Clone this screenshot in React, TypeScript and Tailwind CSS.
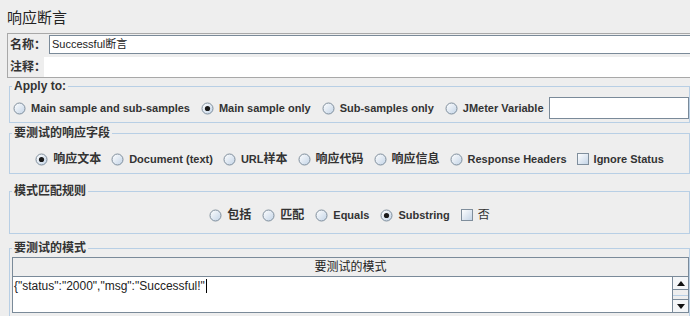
import React from 'react';

const sans = "font-['Liberation_Sans','Noto_Sans_CJK_SC',sans-serif]";

function RadioIcon({ on }: { on?: boolean }) {
  return (
    <svg width="13" height="13" viewBox="0 0 13 13" className="shrink-0">
      <defs>
        <linearGradient id={on ? 'rg-on' : 'rg-off'} x1="0" y1="0" x2="1" y2="1">
          <stop offset="0" stopColor="#ffffff" />
          <stop offset="1" stopColor="#c2d3e6" />
        </linearGradient>
      </defs>
      <circle cx="6.5" cy="6.5" r="5.5" fill={`url(#${on ? 'rg-on' : 'rg-off'})`} stroke="#7f8e9c" strokeWidth="1" />
      {on && <circle cx="6.5" cy="6.5" r="2.6" fill="#1a1a1a" />}
    </svg>
  );
}

function CheckIcon() {
  return (
    <svg width="13" height="13" viewBox="0 0 13 13" className="shrink-0">
      <defs>
        <linearGradient id="cb" x1="0" y1="0" x2="1" y2="1">
          <stop offset="0" stopColor="#ffffff" />
          <stop offset="1" stopColor="#c2d3e6" />
        </linearGradient>
      </defs>
      <rect x="0.5" y="0.5" width="11" height="11" fill="url(#cb)" stroke="#7f8e9c" />
    </svg>
  );
}

function Radio({ label, on, cjk }: { label: React.ReactNode; on?: boolean; cjk?: boolean }) {
  return (
    <div className="flex items-center gap-[5px]">
      <RadioIcon on={on} />
      <span className={`${cjk ? 'text-[12px]' : 'text-[11px]'} font-bold text-[#333333] whitespace-nowrap`}>{label}</span>
    </div>
  );
}

function Check({ label, cjk }: { label: string; cjk?: boolean }) {
  return (
    <div className="flex items-center gap-[4px]">
      <CheckIcon />
      <span className={`${cjk ? 'text-[12px] font-normal' : 'text-[11px] font-bold'} text-[#333333] whitespace-nowrap`}>{label}</span>
    </div>
  );
}

function Group({ title, className, children }: { title: string; className?: string; children: React.ReactNode }) {
  return (
    <fieldset className={`ml-[9px] w-[681px] border border-[#b8cfe5] ${className ?? ''}`}>
      <legend className="ml-[2px] px-[2px] text-[12px] leading-[14px] font-bold text-[#333333]">{title}</legend>
      {children}
    </fieldset>
  );
}

export default function App() {
  return (
    <div className={`w-[690px] h-[316px] overflow-hidden bg-[#eeeeee] ${sans} text-[#333333]`}>
      <div className="h-[27px] pt-[9px] pl-[7px] text-[15px] leading-[18px] text-[#222]">响应断言</div>

      {/* 名称 / 注释 */}
      <div className="mt-[6px] ml-[7px] w-[690px] border border-[#a8a8a8]">
        <div className="flex h-[20px] items-center pt-[1px]">
          <span className="w-[41px] shrink-0 whitespace-nowrap pl-[2px] text-[12px] leading-[14px] font-bold">名称：</span>
          <div className="flex h-[19px] flex-1 items-center border border-[#7a8a99] bg-white pl-[2px] text-[11px] text-[#222]">
            Successful断言
          </div>
        </div>
        <div className="mt-[3px] flex h-[20px] items-center">
          <span className="w-[36px] shrink-0 whitespace-nowrap pl-[2px] text-[12px] leading-[14px] font-bold">注释：</span>
          <div className="h-[20px] flex-1 bg-white"></div>
        </div>
      </div>

      <Group title="Apply to:" className="mt-[1px]">
        <div className="flex h-[22px] items-center pl-[3px] mt-[4px] mb-[3px]">
          <div className="flex items-center gap-[11px]">
            <Radio label="Main sample and sub-samples" />
            <Radio label="Main sample only" on />
            <Radio label="Sub-samples only" />
            <Radio label="JMeter Variable" />
          </div>
          <div className="ml-[5px] h-[22px] flex-1 border border-[#7a8a99] bg-white"></div>
        </div>
      </Group>

      <Group title="要测试的响应字段" className="mt-[3px]">
        <div className="flex h-[20px] items-center justify-center gap-[10px] mt-[9px] mb-[4px]">
          <Radio label="响应文本" on cjk />
          <Radio label="Document (text)" />
          <Radio label={<>URL<span className="text-[12px]">样本</span></>} />
          <Radio label="响应代码" cjk />
          <Radio label="响应信息" cjk />
          <Radio label="Response Headers" />
          <Check label="Ignore Status" />
        </div>
      </Group>

      <Group title="模式匹配规则" className="mt-[10px]">
        <div className="flex h-[20px] items-center justify-center gap-[11px] mt-[7px] mb-[8px]">
          <Radio label="包括" cjk />
          <Radio label="匹配" cjk />
          <Radio label="Equals" />
          <Radio label="Substring" on />
          <Check label="否" cjk />
        </div>
      </Group>

      <Group title="要测试的模式" className="mt-[7px] h-[90px]">
        <div className="ml-[2px] mt-[2px] w-[677px]">
          <div className="flex h-[20px] items-center justify-center border border-[#7a8a99] bg-[#eeeeee] text-[12px] text-[#222]">
            要测试的模式
          </div>
          <div className="flex h-[36px] border-x border-b border-[#7a8a99] bg-white">
            <div className="flex flex-1 items-start pt-[2px] pl-[1px] text-[12px] leading-[14px] text-[#222]">
              <span>{'{"status":"2000","msg":"Successful!"'}</span>
              <span className="ml-[1px] inline-block h-[14px] w-[1px] bg-black"></span>
            </div>
            <div className="flex w-[16px] flex-col border-l border-[#7a8a99] bg-[#eeeeee]">
              <div className="flex h-[13px] items-center justify-center border-b border-[#7a8a99] bg-[#f4f6f8]">
                <svg width="8" height="5" viewBox="0 0 8 5"><path d="M0 5 L4 0 L8 5 Z" fill="#111" /></svg>
              </div>
              <div className="flex-1 border-b border-[#b8cfe5]"></div>
              <div className="h-[3px]"></div>
              <div className="flex h-[13px] items-center justify-center border-t border-[#7a8a99] bg-[#f4f6f8]">
                <svg width="8" height="5" viewBox="0 0 8 5"><path d="M0 0 L8 0 L4 5 Z" fill="#111" /></svg>
              </div>
            </div>
          </div>
        </div>
      </Group>
    </div>
  );
}
